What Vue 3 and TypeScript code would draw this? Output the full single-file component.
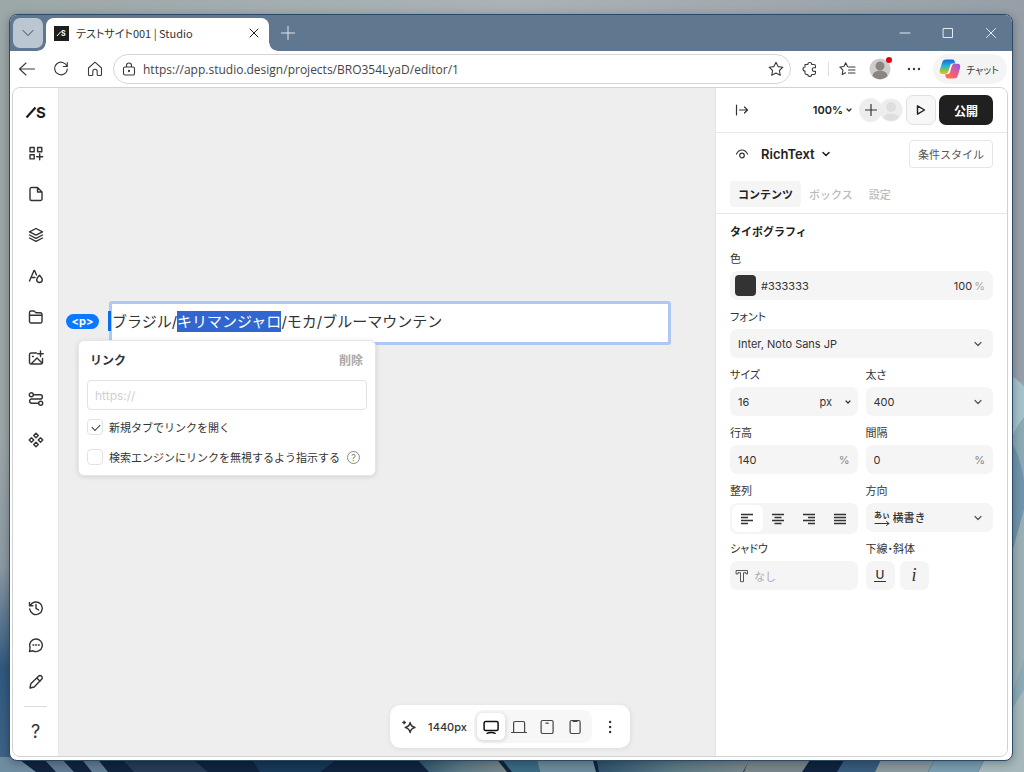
<script setup lang="ts">
import { ref } from 'vue'

interface Tool { id: string; label: string; paths: string[] }

const tools: Tool[] = [
  { id: 'add', label: '追加', paths: ['M2 2.500h4.200v4.200H2zM9.600 2.500h4.200v4.200H9.600zM2 9.700h4.200v4.200H2zM11.700 8.700v6M8.700 11.700h6'] },
  { id: 'page', label: 'ページ', paths: ['M3.500 1.500h6l4.500 4.500v7a1.500 1.500 0 0 1-1.500 1.500h-9A1.500 1.500 0 0 1 2 13V3a1.500 1.500 0 0 1 1.500-1.500M9.500 1.500V6H14'] },
  { id: 'layers', label: 'レイヤー', paths: ['M8 1.500l6.500 3.300L8 8.100 1.500 4.800zM1.500 8L8 11.300 14.500 8M1.500 11L8 14.300 14.500 11'] },
  { id: 'style', label: 'スタイル', paths: ['M1.500 13L6 2.500h.6L8.500 7M3 9.500h4M11.500 7.200c1.700 2 2.800 3.200 2.800 4.500a2.800 2.800 0 0 1-5.600 0c0-1.300 1.100-2.500 2.800-4.500z'] },
  { id: 'folder', label: 'ファイル', paths: ['M1.500 12.500v-9a1.500 1.500 0 0 1 1.500-1.500h3l2 1.700h4.500a1.500 1.500 0 0 1 1.500 1.500v7.300a1.500 1.500 0 0 1-1.500 1.500H3a1.500 1.500 0 0 1-1.500-1.500zM1.500 6.300h12.500'] },
  { id: 'image', label: '画像', paths: ['M8.500 3H3a1.500 1.500 0 0 0-1.500 1.500v8A1.500 1.500 0 0 0 3 14h10a1.500 1.500 0 0 0 1.500-1.500V8.500M12.500 1v5.500M9.700 3.700h5.500M4.500 6.500h.8M3.500 13.500L9 8l5 5'] },
  { id: 'flow', label: 'フロー', paths: ['M1.300 3.800a2 2 0 1 0 4 0a2 2 0 1 0-4 0M10.700 12.200a2 2 0 1 0 4 0a2 2 0 1 0-4 0M5.300 3.800h7a2.100 2.100 0 0 1 0 4.200H3.700a2.100 2.100 0 0 0 0 4.200h7'] },
  { id: 'apps', label: 'アプリ', paths: ['M8 1.200l2.300 2.300L8 5.800 5.700 3.500zM8 10.200l2.300 2.300L8 14.800l-2.300-2.300zM3.500 5.700L5.800 8l-2.300 2.300L1.200 8zM12.500 5.700L14.800 8l-2.300 2.300L10.200 8z'] },
]

const footTools: Tool[] = [
  { id: 'history', label: '履歴', paths: ['M2.300 5.500A6.300 6.300 0 1 1 1.700 9M1.500 2.500v3.200h3.300M8 4.500V8.300l2.600 1.700'] },
  { id: 'comment', label: 'コメント', paths: ['M1.500 14.500l.6-4A6.300 6.300 0 1 1 5 13.800zM5 8h.8M7.700 8h.8M10.400 8h.8'] },
  { id: 'edit', label: '編集', paths: ['M2 14l.8-4.200 7.700-7.600a2.100 2.100 0 0 1 3.100 0a2.100 2.100 0 0 1 0 3.100L6.200 13zM8.800 4l3.200 3.200'] },
]

const tabs = ['コンテンツ', 'ボックス', '設定']
const activeTab = ref('コンテンツ')

const devices: Tool[] = [
  { id: 'desktop', label: 'デスクトップ', paths: ['M2.500 2.500h11A1.500 1.500 0 0 1 15 4v6a1.500 1.500 0 0 1-1.500 1.500h-11A1.500 1.500 0 0 1 1 10V4a1.500 1.500 0 0 1 1.500-1.500zM4 14.300c2-1.200 6-1.200 8 0'] },
  { id: 'laptop', label: 'ノート', paths: ['M2.500 13V4A1.500 1.500 0 0 1 4 2.500h8A1.500 1.500 0 0 1 13.500 4v9M.5 13.500h15'] },
  { id: 'tablet', label: 'タブレット', paths: ['M3.500 1.500h9a1.500 1.500 0 0 1 1.500 1.500v10a1.500 1.500 0 0 1-1.500 1.500h-9A1.500 1.500 0 0 1 2 13V3a1.500 1.500 0 0 1 1.500-1.500zM6.800 4.200h2.400'] },
  { id: 'phone', label: 'モバイル', paths: ['M4.500 1.500h7A1.500 1.500 0 0 1 13 3v10a1.500 1.500 0 0 1-1.500 1.500h-7A1.500 1.500 0 0 1 3 13V3a1.500 1.500 0 0 1 1.500-1.500zM6 2.300h4'] },
]
const device = ref('desktop')

const aligns = [
  { id: 'left', label: '左揃え', d: 'M2 3.500h12M2 6.500h7M2 9.500h12M2 12.500h7' },
  { id: 'center', label: '中央揃え', d: 'M2 3.500h12M4.500 6.500h7M2 9.500h12M4.500 12.500h7' },
  { id: 'right', label: '右揃え', d: 'M2 3.500h12M7 6.500h7M2 9.500h12M7 12.500h7' },
  { id: 'justify', label: '両端揃え', d: 'M2 3.500h12M2 6.500h12M2 9.500h12M2 12.500h12' },
]
const align = ref('left')

const address = ref('https://app.studio.design/projects/BRO354LyaD/editor/1')
const link = ref('')
const newTab = ref(true)
const noFollow = ref(false)
const color = ref('#333333')
const opacity = ref('100')
const size = ref('16')
const lineHeight = ref('140')
const spacing = ref('0')
</script>

<template>
  <div class="desktop">
    <svg class="wallpaper" viewBox="0 0 1024 772" preserveAspectRatio="none" aria-hidden="true">
      <defs>
        <linearGradient id="sky" x1="0" x2="1" y1="0" y2="0">
          <stop offset="0" stop-color="#9ca7a8" /><stop offset=".5" stop-color="#aab2b5" /><stop offset="1" stop-color="#969ea7" />
        </linearGradient>
        <linearGradient id="leftBlue" x1="0" x2="0" y1="0" y2="1">
          <stop offset="0" stop-color="#9ca7a8" /><stop offset=".4" stop-color="#8c9aa3" /><stop offset=".7" stop-color="#30587f" /><stop offset="1" stop-color="#3f6588" />
        </linearGradient>
        <linearGradient id="petal" x1="0" x2="1" y1="0" y2="0">
          <stop offset="0" stop-color="#2e526c" /><stop offset=".5" stop-color="#5a7885" /><stop offset="1" stop-color="#78878c" />
        </linearGradient>
      </defs>
      <rect width="1024" height="772" fill="url(#sky)" />
      <rect y="430" width="12" height="342" fill="url(#leftBlue)" />
      <rect x="1010" y="382" width="14" height="390" fill="#8baab5" />
      <path d="M1010 375q10 6 14 12v30q-8 10-14 24z" fill="#a5c2cb" />
      <path d="M1010 440q9 12 14 40v30l-14 50z" fill="#6f95aa" />
      <path d="M1010 560l14-50v150l-14 40z" fill="#9bb0b5" />
      <path d="M1010 712l14-22v82h-14z" fill="#a6b8bc" />
      <rect y="757" width="1024" height="15" fill="#102440" />
      <path d="M0 757h16l20 15H0z" fill="#6f8da1" />
      <path d="M42 757h18l14 15H56zM80 757h16l12 15H92z" fill="#607b92" />
      <path d="M120 757h70l18 15h-74z" fill="#263b55" />
      <path d="M250 757h90l-20 15h-60z" fill="#173857" />
      <path d="M415 757h80l12 15h-78z" fill="url(#petal)" />
      <path d="M500 757h36l4 15h-28z" fill="#3a6a83" />
      <path d="M536 757h56l4 15h-56z" fill="#6c8c9b" />
      <path d="M596 757h155l-8 15H599z" fill="url(#petal)" />
      <path d="M750 757h62l-10 15h-58z" fill="#78868a" />
      <path d="M846 757h36l-7 15h-38z" fill="#365c7c" />
      <path d="M882 757h54l-8 15h-53z" fill="#8a999c" />
      <path d="M936 757h50l-8 15h-50z" fill="#789daf" />
      <path d="M986 757h38v15h-46z" fill="#a6b8bc" />
    </svg>

    <div class="window">
      <header class="titlebar">
        <button class="tab-menu" aria-label="タブ操作">
          <svg width="14" height="14" viewBox="0 0 14 14"><path d="M2 4.500L7 9.500 12 4.500" /></svg>
        </button>
        <div class="browser-tab">
          <svg class="favicon" width="15" height="15" viewBox="0 0 15 15">
            <rect width="15" height="15" />
            <path d="M3 10L7 5.500" />
            <text x="7" y="10" font-size="7" font-weight="700">S</text>
          </svg>
          <span class="tab-title">テストサイト001 | Studio</span>
          <button class="icon-btn tab-close" aria-label="タブを閉じる">
            <svg width="12" height="12" viewBox="0 0 12 12"><path d="M2 2l8 8M10 2l-8 8" /></svg>
          </button>
        </div>
        <button class="icon-btn new-tab" aria-label="新しいタブ">
          <svg width="14" height="14" viewBox="0 0 14 14"><path d="M7 .5v13M.5 7h13" /></svg>
        </button>
        <div class="window-controls">
          <button aria-label="最小化"><svg width="12" height="12" viewBox="0 0 12 12"><path d="M1 6h10" /></svg></button>
          <button aria-label="最大化"><svg width="12" height="12" viewBox="0 0 12 12"><path d="M1.500 1.500h9v9h-9z" /></svg></button>
          <button aria-label="閉じる"><svg width="12" height="12" viewBox="0 0 12 12"><path d="M1.500 1.500l9 9M10.500 1.500l-9 9" /></svg></button>
        </div>
      </header>

      <nav class="browser-bar">
        <div class="nav-buttons">
          <button class="icon-btn" aria-label="戻る"><svg width="18" height="18" viewBox="0 0 18 18"><path d="M16.500 9h-15M8 3L1.500 9 8 15" /></svg></button>
          <button class="icon-btn" aria-label="更新"><svg width="18" height="18" viewBox="0 0 18 18"><path d="M15 6.500A6.300 6.300 0 1 0 15.300 9M15.300 2.500v4h-4" /></svg></button>
          <button class="icon-btn" aria-label="ホーム"><svg width="18" height="18" viewBox="0 0 18 18"><path d="M2.500 8L9 2.200 15.500 8v6.500a1 1 0 0 1-1 1h-2.300a1 1 0 0 1-1-1V11.500a2.200 2.200 0 0 0-4.400 0v3a1 1 0 0 1-1 1H3.500a1 1 0 0 1-1-1z" /></svg></button>
        </div>
        <div class="address">
          <svg width="14" height="14" viewBox="0 0 14 14"><path d="M3 5h8a1.500 1.500 0 0 1 1.500 1.500v5A1.500 1.500 0 0 1 11 13H3a1.500 1.500 0 0 1-1.500-1.500v-5A1.500 1.500 0 0 1 3 5zM4.500 5V3.500a2.500 2.500 0 0 1 5 0V5" /><circle cx="7" cy="9" r=".6" /></svg>
          <input v-model="address" type="text" aria-label="アドレス">
          <button class="icon-btn" aria-label="お気に入りに追加"><svg width="16" height="16" viewBox="0 0 16 16"><path d="M8 1.200l2.100 4.400 4.800.6-3.500 3.300.9 4.800L8 12l-4.300 2.300.9-4.800L1.100 6.200l4.800-.6z" /></svg></button>
        </div>
        <button class="icon-btn ext" aria-label="拡張機能"><svg width="16" height="16" viewBox="0 0 16 16"><path d="M3 3.500h2.800a2 2 0 1 1 4 0H12a1.500 1.500 0 0 1 1.500 1.500v1.800H12a1.800 1.800 0 0 0 0 3.600h1.500V12a1.500 1.500 0 0 1-1.500 1.500H9.800a2 2 0 0 1-4 0H4.500A1.500 1.500 0 0 1 3 12v-2a2 2 0 0 1 0-4z" /></svg></button>
        <span class="bar-rule" />
        <button class="icon-btn fav" aria-label="お気に入り"><svg width="17" height="16" viewBox="0 0 17 16"><path d="M8.500 5.500L6.700 1.700 4.900 5.500l-4 .6 3 3-.7 4.500 3.300-1.800M9.500 6h6.500M9.500 9h6.500M9.500 12h6.500" /></svg></button>
        <button class="profile" aria-label="プロフィール">
          <svg width="22" height="22" viewBox="0 0 22 22"><circle cx="11" cy="11" r="10.500" fill="#cfcdcb" /><circle cx="11" cy="8" r="4.500" fill="#8a8684" /><path d="M3.500 18a7.500 5.500 0 0 1 15 0a10.500 10.500 0 0 1-15 0z" fill="#8a8684" /></svg>
          <span class="alert-dot" />
        </button>
        <button class="icon-btn more" aria-label="その他"><svg width="14" height="4" viewBox="0 0 14 4"><g class="solid"><circle cx="2" cy="2" r="1.200" /><circle cx="7" cy="2" r="1.200" /><circle cx="12" cy="2" r="1.200" /></g></svg></button>
        <button class="copilot">
          <svg width="22" height="20" viewBox="0 0 22 20">
            <defs>
              <linearGradient id="cpBlue" x1="0" y1="0" x2="0" y2="1"><stop offset="0" stop-color="#1d63e0" /><stop offset=".45" stop-color="#20b6d8" /><stop offset=".75" stop-color="#8bc34a" /><stop offset="1" stop-color="#f2c21a" /></linearGradient>
              <linearGradient id="cpPink" x1="1" y1="0" x2="0" y2="1"><stop offset="0" stop-color="#8f55e8" /><stop offset=".5" stop-color="#ec5a8a" /><stop offset="1" stop-color="#ff7a2f" /></linearGradient>
            </defs>
            <path d="M7 .5h6.500c1.200 0 1.800.8 2.200 2l.6 2h-2.500c-1.500 0-2.300.8-2.700 2.200L9.400 12c-.5 1.800-1.400 3-3 3H3.500C1 15 .3 13 .9 10.700L3.300 3C3.900 1.300 5.300.5 7 .5z" fill="url(#cpBlue)" />
            <path d="M15 19.500H9c-1.400 0-2-.8-2.400-2.200L6 15.200h2.300c1.500 0 2.400-.8 2.800-2.200l1.500-5.300c.5-1.900 1.400-3 3-3h2.900c2.500 0 3.200 2 2.600 4.300L18.700 17c-.6 1.700-2 2.500-3.700 2.500z" fill="url(#cpPink)" />
          </svg>
          <span>チャット</span>
        </button>
      </nav>

      <div class="app">
        <aside class="rail">
          <button class="rail-btn" aria-label="Studio">
            <svg class="logo" width="22" height="16" viewBox="0 0 22 16"><path d="M1.500 13.500L10.500 3.500" /><text x="11" y="13.500" font-size="15" font-weight="700">S</text></svg>
          </button>
          <button v-for="t in tools" :key="t.id" class="rail-btn" :aria-label="t.label">
            <svg width="16" height="16" viewBox="0 0 16 16"><path v-for="d in t.paths" :key="d" :d="d" /></svg>
          </button>
          <div class="rail-foot">
            <button v-for="t in footTools" :key="t.id" class="rail-btn foot" :aria-label="t.label">
              <svg width="16" height="16" viewBox="0 0 16 16"><path v-for="d in t.paths" :key="d" :d="d" /></svg>
            </button>
            <hr>
            <button class="rail-btn help-btn" aria-label="ヘルプ">?</button>
          </div>
        </aside>

        <main class="canvas">
          <div class="node">
            <span class="tag">&lt;p&gt;</span>
            <div class="rich-text">
              <span class="caret" />
              <p>ブラジル/<mark>キリマンジャロ</mark>/モカ/ブルーマウンテン</p>
            </div>
            <form class="link-popover" @submit.prevent>
              <div class="link-head">
                <label for="link-url">リンク</label>
                <button type="button" @click="link = ''">削除</button>
              </div>
              <input id="link-url" v-model="link" class="url" type="text" placeholder="https://">
              <div class="check-row">
                <input id="new-tab" v-model="newTab" type="checkbox">
                <label for="new-tab">新規タブでリンクを開く</label>
              </div>
              <div class="check-row">
                <input id="no-follow" v-model="noFollow" type="checkbox">
                <label for="no-follow">検索エンジンにリンクを無視するよう指示する</label>
                <button type="button" class="hint" aria-label="説明">?</button>
              </div>
            </form>
          </div>
        </main>

        <aside class="panel">
          <div class="panel-top">
            <button class="icon-btn" aria-label="パネルを閉じる"><svg width="14" height="12" viewBox="0 0 14 12"><path d="M1.500 1v10M4.500 6h8M9.500 3l3 3-3 3" /></svg></button>
            <button class="zoom">100%<svg width="8" height="8" viewBox="0 0 8 8"><path d="M2 3L4 5 6 3" /></svg></button>
            <div class="members">
              <button class="invite" aria-label="招待"><svg width="12" height="12" viewBox="0 0 12 12"><path d="M6 .5v11M.5 6h11" /></svg></button>
              <svg class="member" width="24" height="24" viewBox="0 0 24 24"><circle cx="12" cy="12" r="11.500" fill="#ededed" /><circle cx="12" cy="9" r="5" fill="#dedede" /><path d="M4.500 20a7.500 4.500 0 0 1 15 0a11.500 11.500 0 0 1-15 0z" fill="#dedede" /></svg>
            </div>
            <button class="play" aria-label="プレビュー"><svg width="12" height="14" viewBox="0 0 12 14"><path d="M2.500 2.800v8.400L9.500 7z" /></svg></button>
            <button class="publish">公開</button>
          </div>

          <div class="panel-node">
            <svg class="eye" width="14" height="14" viewBox="0 0 14 14"><path d="M1.500 7C3 4 5 3 7 3s4 1 5.500 4" /><circle cx="7" cy="8.500" r="2.300" /></svg>
            <button class="node-name">RichText<svg width="10" height="10" viewBox="0 0 10 10"><path d="M2 3.500L5 6.500 8 3.500" /></svg></button>
            <button class="cond">条件スタイル</button>
          </div>
          <div class="tabs" role="tablist">
            <button v-for="t in tabs" :key="t" role="tab" :aria-selected="activeTab === t" :class="{ active: activeTab === t }" @click="activeTab = t">{{ t }}</button>
          </div>

          <section class="typo">
            <h2>タイポグラフィ</h2>
            <div class="grid">
              <div class="cell wide">
                <label for="color">色</label>
                <div class="field">
                  <span class="swatch" />
                  <input id="color" v-model="color" type="text">
                  <input v-model="opacity" class="opacity" type="text" aria-label="不透明度">
                  <span class="unit">%</span>
                </div>
              </div>
              <div class="cell wide">
                <label for="font">フォント</label>
                <div class="field">
                  <select id="font"><option>Inter, Noto Sans JP</option></select>
                  <svg class="chev" width="10" height="10" viewBox="0 0 10 10"><path d="M2 3.500L5 6.500 8 3.500" /></svg>
                </div>
              </div>
              <div class="cell">
                <label for="size">サイズ</label>
                <div class="field">
                  <input id="size" v-model="size" type="text">
                  <span class="unit-select">
                    <select aria-label="単位"><option>px</option></select>
                    <svg width="8" height="8" viewBox="0 0 8 8"><path d="M2 3L4 5 6 3" /></svg>
                  </span>
                </div>
              </div>
              <div class="cell">
                <label for="weight">太さ</label>
                <div class="field">
                  <select id="weight"><option>400</option></select>
                  <svg class="chev" width="10" height="10" viewBox="0 0 10 10"><path d="M2 3.500L5 6.500 8 3.500" /></svg>
                </div>
              </div>
              <div class="cell">
                <label for="line">行高</label>
                <div class="field"><input id="line" v-model="lineHeight" type="text"><span class="unit dark">%</span></div>
              </div>
              <div class="cell">
                <label for="spacing">間隔</label>
                <div class="field"><input id="spacing" v-model="spacing" type="text"><span class="unit dark">%</span></div>
              </div>
              <div class="cell">
                <span id="align-label" class="label">整列</span>
                <div class="field aligns" role="group" aria-labelledby="align-label">
                  <button v-for="a in aligns" :key="a.id" :aria-label="a.label" :aria-pressed="align === a.id" :class="{ on: align === a.id }" @click="align = a.id">
                    <svg width="16" height="16" viewBox="0 0 16 16"><path :d="a.d" /></svg>
                  </button>
                </div>
              </div>
              <div class="cell">
                <label for="dir">方向</label>
                <div class="field dir">
                  <svg class="dir-icon" width="18" height="18" viewBox="0 0 18 18"><text x="1" y="9" font-size="8" font-weight="700">あぃ</text><path d="M2 14.500h14M13.500 12.500l2.500 2-2.500 2" /></svg>
                  <select id="dir"><option>横書き</option></select>
                  <svg class="chev" width="10" height="10" viewBox="0 0 10 10"><path d="M2 3.500L5 6.500 8 3.500" /></svg>
                </div>
              </div>
              <div class="cell">
                <span id="shadow-label" class="label">シャドウ</span>
                <button class="field shadow" aria-labelledby="shadow-label">
                  <svg width="14" height="14" viewBox="0 0 14 14"><path d="M1.500 1.500h11v3.500h-1.500V3.700H8.500v9h-3v-9H3V5H1.500z" /></svg>
                  <span>なし</span>
                </button>
              </div>
              <div class="cell">
                <span id="deco-label" class="label">下線・斜体</span>
                <div class="deco" role="group" aria-labelledby="deco-label">
                  <button class="under" aria-label="下線"><span>U</span></button>
                  <button class="ital" aria-label="斜体">i</button>
                </div>
              </div>
            </div>
          </section>
        </aside>

        <div class="device-bar">
          <button class="icon-btn spark" aria-label="AI"><svg width="16" height="16" viewBox="0 0 16 16"><path d="M9 3.500c.6 3 1.900 4.300 4.900 5-3 .7-4.300 2-4.900 5-.6-3-1.900-4.300-4.900-5 3-.7 4.300-2 4.900-5z" /><path d="M3 2.200v2.600M1.700 3.500h2.600" /></svg></button>
          <span class="width">1440px</span>
          <div class="devices">
            <button v-for="d in devices" :key="d.id" :aria-label="d.label" :class="{ on: device === d.id }" @click="device = d.id">
              <svg width="16" height="16" viewBox="0 0 16 16"><path v-for="p in d.paths" :key="p" :d="p" /></svg>
            </button>
          </div>
          <button class="icon-btn dots" aria-label="その他"><svg width="4" height="14" viewBox="0 0 4 14"><g class="solid"><circle cx="2" cy="2" r="1.200" /><circle cx="2" cy="7" r="1.200" /><circle cx="2" cy="12" r="1.200" /></g></svg></button>
        </div>
      </div>
    </div>
  </div>
</template>

<style>
html, body, #app { height: 100%; }
body { margin: 0; }
</style>

<style scoped>
* { box-sizing: border-box; }
button, input, select { font: inherit; color: inherit; border: 0; padding: 0; margin: 0; background: none; min-width: 0; outline: none; }
button { cursor: pointer; display: flex; align-items: center; justify-content: center; flex: none; }
select { appearance: none; }
svg { display: block; flex: none; fill: none; stroke: currentColor; stroke-width: 1.2; stroke-linecap: round; stroke-linejoin: round; }
svg text { fill: currentColor; stroke: none; font-family: Inter, "Noto Sans CJK JP", sans-serif; }
.solid { fill: currentColor; stroke: none; }

.desktop { position: relative; display: flex; min-height: 100%; padding: 14px 11px 11px 9px; font-family: Inter, "Noto Sans CJK JP", sans-serif; font-size: 11px; color: #333; }
.wallpaper { position: absolute; inset: 0; width: 100%; height: 100%; stroke: none; }
.window { position: relative; flex: 1; min-width: 0; display: flex; flex-direction: column; border: 1px solid #2a4a67; border-radius: 8px; background: #fff; overflow: hidden; box-shadow: 0 2px 10px rgba(0, 0, 0, .3); }

.titlebar { display: flex; align-items: center; height: 36px; flex: none; padding-left: 3px; background: #5f778f; color: #e4eaf0; }
.titlebar svg { stroke-width: 1; }
.tab-menu { width: 30px; height: 30px; border-radius: 7px; background: #bac6d1; color: #3c4248; }
.browser-tab { position: relative; align-self: flex-end; display: flex; align-items: center; width: 223px; height: 33px; margin-left: 3px; padding: 0 6px 3px 8px; background: #fff; border-radius: 8px 8px 0 0; color: #222; }
.browser-tab::before, .browser-tab::after { content: ""; position: absolute; bottom: 0; width: 8px; height: 8px; }
.browser-tab::before { left: -8px; background: radial-gradient(circle at 0 0, transparent 7px, #fff 8px); }
.browser-tab::after { right: -8px; background: radial-gradient(circle at 100% 0, transparent 7px, #fff 8px); }
.tab-title { flex: 1; margin-left: 7px; font-family: "Noto Sans CJK JP", sans-serif; font-size: 11px; font-feature-settings: "palt"; color: #333; }
.tab-close { width: 18px; height: 18px; }
.favicon { color: #fff; stroke-linecap: butt; }
.favicon rect { fill: #1e1e1e; stroke: none; }
.new-tab { margin-left: 12px; }
.window-controls { display: flex; margin-left: auto; }
.window-controls button { width: 43px; height: 36px; }

.browser-bar { display: flex; align-items: center; height: 36px; flex: none; padding: 0 5px 0 8px; color: #3a3a3a; }
.browser-bar svg { stroke-width: 1.1; }
.nav-buttons { display: flex; gap: 16px; }
.address { display: flex; align-items: center; flex: 1; min-width: 0; height: 30px; margin-left: 9px; padding: 0 6px 0 8px; border: 1px solid #d4d4d4; border-radius: 15px; }
.address input { flex: 1; margin-left: 7px; font-family: "Open Sans", sans-serif; font-size: 12px; color: #444; }
.ext { margin-left: 11px; }
.bar-rule { width: 1px; height: 14px; margin: 0 10px; background: #ddd; }
.profile { position: relative; margin-left: 13px; }
.alert-dot { position: absolute; top: -1px; right: -1px; width: 6px; height: 6px; border-radius: 50%; background: #e60012; }
.more { margin-left: 16px; }
.copilot { height: 30px; margin-left: 12px; padding: 0 8px 0 6px; gap: 5px; border-radius: 15px; background: #f4f4f4; font-family: "Noto Sans CJK JP", sans-serif; font-size: 10px; font-feature-settings: "palt"; }
.copilot svg, .profile svg { stroke: none; }

.app { position: relative; flex: 1; display: grid; grid-template-columns: 46px minmax(0, 1fr) 292px; margin: 0 4px 3px 2px; border: 1px solid #d2d2d2; border-radius: 8px; overflow: hidden; background: #eee; }
.rail { display: flex; flex-direction: column; align-items: center; padding: 3px 0 7px; background: #fff; border-right: 1px solid #e8e8e8; }
.rail-btn { width: 46px; height: 41px; }
.rail-btn svg { stroke-width: 1.4; }
.rail-btn .logo { stroke-width: 2.2; stroke-linecap: butt; color: #1e1e1e; }
.rail-foot { display: flex; flex-direction: column; align-items: center; margin-top: auto; }
.rail-btn.foot { height: 37px; }
.rail hr { width: 23px; height: 1px; margin: 6px 0; border: 0; background: #ddd; }
.help-btn { height: 36px; font-size: 18px; }

.canvas { padding: 213px 44px 0 7px; }
.node { position: relative; display: flex; align-items: center; }
.tag { width: 33px; height: 15px; margin-right: 10px; line-height: 15px; text-align: center; border-radius: 8px; background: #0a78ff; color: #fff; font-size: 11px; font-weight: 700; margin-bottom: 3px; }
.rich-text { position: relative; flex: 1; height: 44px; padding: 7px 0; border: 3px solid #adc8f2; border-radius: 3px; background: #fff; }
.rich-text p { margin: 0; font-size: 15px; line-height: 21px; color: #333; white-space: nowrap; }
.rich-text mark { display: inline-block; background: #3266cf; color: #fff; }
.caret { position: absolute; left: -4px; top: 7px; width: 3px; height: 20px; background: #0a6cf0; }

.link-popover { position: absolute; left: 12px; top: 39px; width: 298px; padding: 0 8px 5px; border: 1px solid #e6e6e6; border-radius: 6px; background: #fff; box-shadow: 0 1px 5px rgba(0, 0, 0, .12); }
.link-head { display: flex; align-items: center; justify-content: space-between; height: 39px; padding: 0 4px 2px 3px; font-size: 12px; font-weight: 700; }
.link-head button { color: #aaa; }
.url { display: block; width: 100%; height: 30px; padding: 0 7px; border: 1px solid #e2e2e2; border-radius: 4px; font-size: 12px; }
.url::placeholder { color: #d0d0d0; }
.check-row { display: flex; align-items: center; height: 30px; padding-top: 4px; white-space: nowrap; }
.check-row input { position: relative; appearance: none; width: 16px; height: 16px; margin-right: 6px; border: 1px solid #e2e2e2; border-radius: 4px; flex: none; }
.check-row input:checked::after { content: ""; position: absolute; left: 4px; top: 4px; width: 7px; height: 4px; border: solid #333; border-width: 0 0 1px 1px; transform: rotate(-45deg); }
.hint { width: 13px; height: 13px; margin-left: 7px; border: 1px solid #888; border-radius: 50%; font-size: 9px; color: #777; }

.panel { background: #fff; border-left: 1px solid #e4e4e4; }
.panel-top { display: flex; align-items: center; height: 45px; padding: 0 14px 0 19px; border-bottom: 1px solid #e6e6e6; }
.zoom { margin-left: auto; gap: 2px; font-weight: 600; color: #222; }
.members { display: flex; margin: 0 3px 0 6px; }
.invite { width: 23px; height: 24px; border-radius: 50%; background: #ededed; }
.member { margin-left: -3px; stroke: none; }
.play { width: 30px; height: 30px; border: 1px solid #e0e0e0; border-radius: 7px; background: #f7f7f7; color: #222; }
.play svg { stroke-width: 1.4; }
.publish { width: 54px; height: 30px; margin-left: 3px; border-radius: 7px; background: #202020; color: #fff; font-size: 12px; font-weight: 700; }
.panel-node { display: flex; align-items: center; height: 42px; padding: 0 14px 0 19px; }
.node-name { margin-left: 12px; gap: 6px; font-size: 13px; font-weight: 600; color: #1e1e1e; }
.node-name svg { stroke-width: 1.5; }
.cond { margin-left: auto; height: 28px; padding: 0 8px; border: 1px solid #e6e6e6; border-radius: 4px; color: #555; }
.tabs { display: flex; height: 39px; padding: 6px 14px; border-bottom: 1px solid #e6e6e6; align-items: center; }
.tabs button { height: 26px; padding: 0 8px; border-radius: 4px; color: #bbb; font-weight: 500; }
.tabs .active { background: #f5f5f5; color: #222; font-weight: 700; }

.typo { padding: 10px 14px; }
.typo h2 { margin: 0 0 10px; font-size: 11px; line-height: 16px; font-weight: 700; color: #222; }
.grid { display: grid; grid-template-columns: 1fr 1fr; gap: 8px; }
.cell { min-width: 0; }
.wide { grid-column: 1 / -1; }
.cell > label, .label { display: block; height: 16px; margin-bottom: 5px; line-height: 16px; font-family: "Noto Sans CJK JP", sans-serif; font-feature-settings: "palt"; white-space: nowrap; }
.field { position: relative; display: flex; align-items: center; width: 100%; height: 29px; border-radius: 7px; background: #f5f5f5; }
.field > input { flex: 1; width: 0; height: 100%; padding-left: 8px; }
.field > select { flex: 1; width: 100%; height: 100%; padding: 0 24px 0 8px; }
.chev { position: absolute; right: 10px; color: #555; pointer-events: none; }
.swatch { width: 21px; height: 21px; margin-left: 5px; border-radius: 4px; background: #333; }
.field .swatch + input { padding-left: 5px; }
.field .opacity { flex: none; width: 24px; padding: 0; text-align: right; }
.unit { margin: 0 8px 0 2px; color: #aaa; }
.unit.dark { color: #888; }
.unit-select { display: flex; align-items: center; gap: 11px; padding-right: 6px; }
.aligns { height: 31px; padding: 2px; margin-bottom: -2px; }
.aligns button { flex: 1; height: 27px; border-radius: 6px; }
.aligns .on { background: #fff; }
.aligns svg { stroke-width: 1.4; stroke-linecap: butt; }
.dir-icon { margin-left: 7px; }
.dir-icon path { stroke-width: 1; }
.field.dir > select { padding-left: 2px; font-weight: 500; }
.shadow { justify-content: flex-start; padding-left: 5px; gap: 5px; color: #aaa; }
.shadow svg { stroke-width: 1; color: #555; }
.deco { display: flex; gap: 5px; }
.deco button { width: 29px; height: 29px; border-radius: 7px; background: #f5f5f5; }
.under span { width: 12px; font-size: 12px; line-height: 12px; border-bottom: 1px solid #333; text-align: center; font-weight: 500; }
.ital { font-family: "Liberation Serif", serif; font-style: italic; font-size: 18px; }

.device-bar { position: absolute; left: 50%; bottom: 8px; transform: translateX(-50%); display: flex; align-items: center; height: 43px; padding: 0 18px 0 11px; border-radius: 10px; background: #fff; box-shadow: 0 1px 5px rgba(0, 0, 0, .08); }
.spark svg { stroke-width: 1.4; }
.width { margin: 0 7px 0 11px; font-weight: 500; }
.devices { display: flex; align-items: center; height: 33px; padding: 0 3px; border-radius: 9px; background: #f7f7f7; }
.devices button { width: 28px; height: 27px; border-radius: 6px; color: #444; }
.devices .on { background: #fff; color: #111; box-shadow: 0 1px 5px rgba(0, 0, 0, .14); }
.devices .on svg { stroke-width: 1.5; }
.dots { margin-left: 16px; }
</style>
